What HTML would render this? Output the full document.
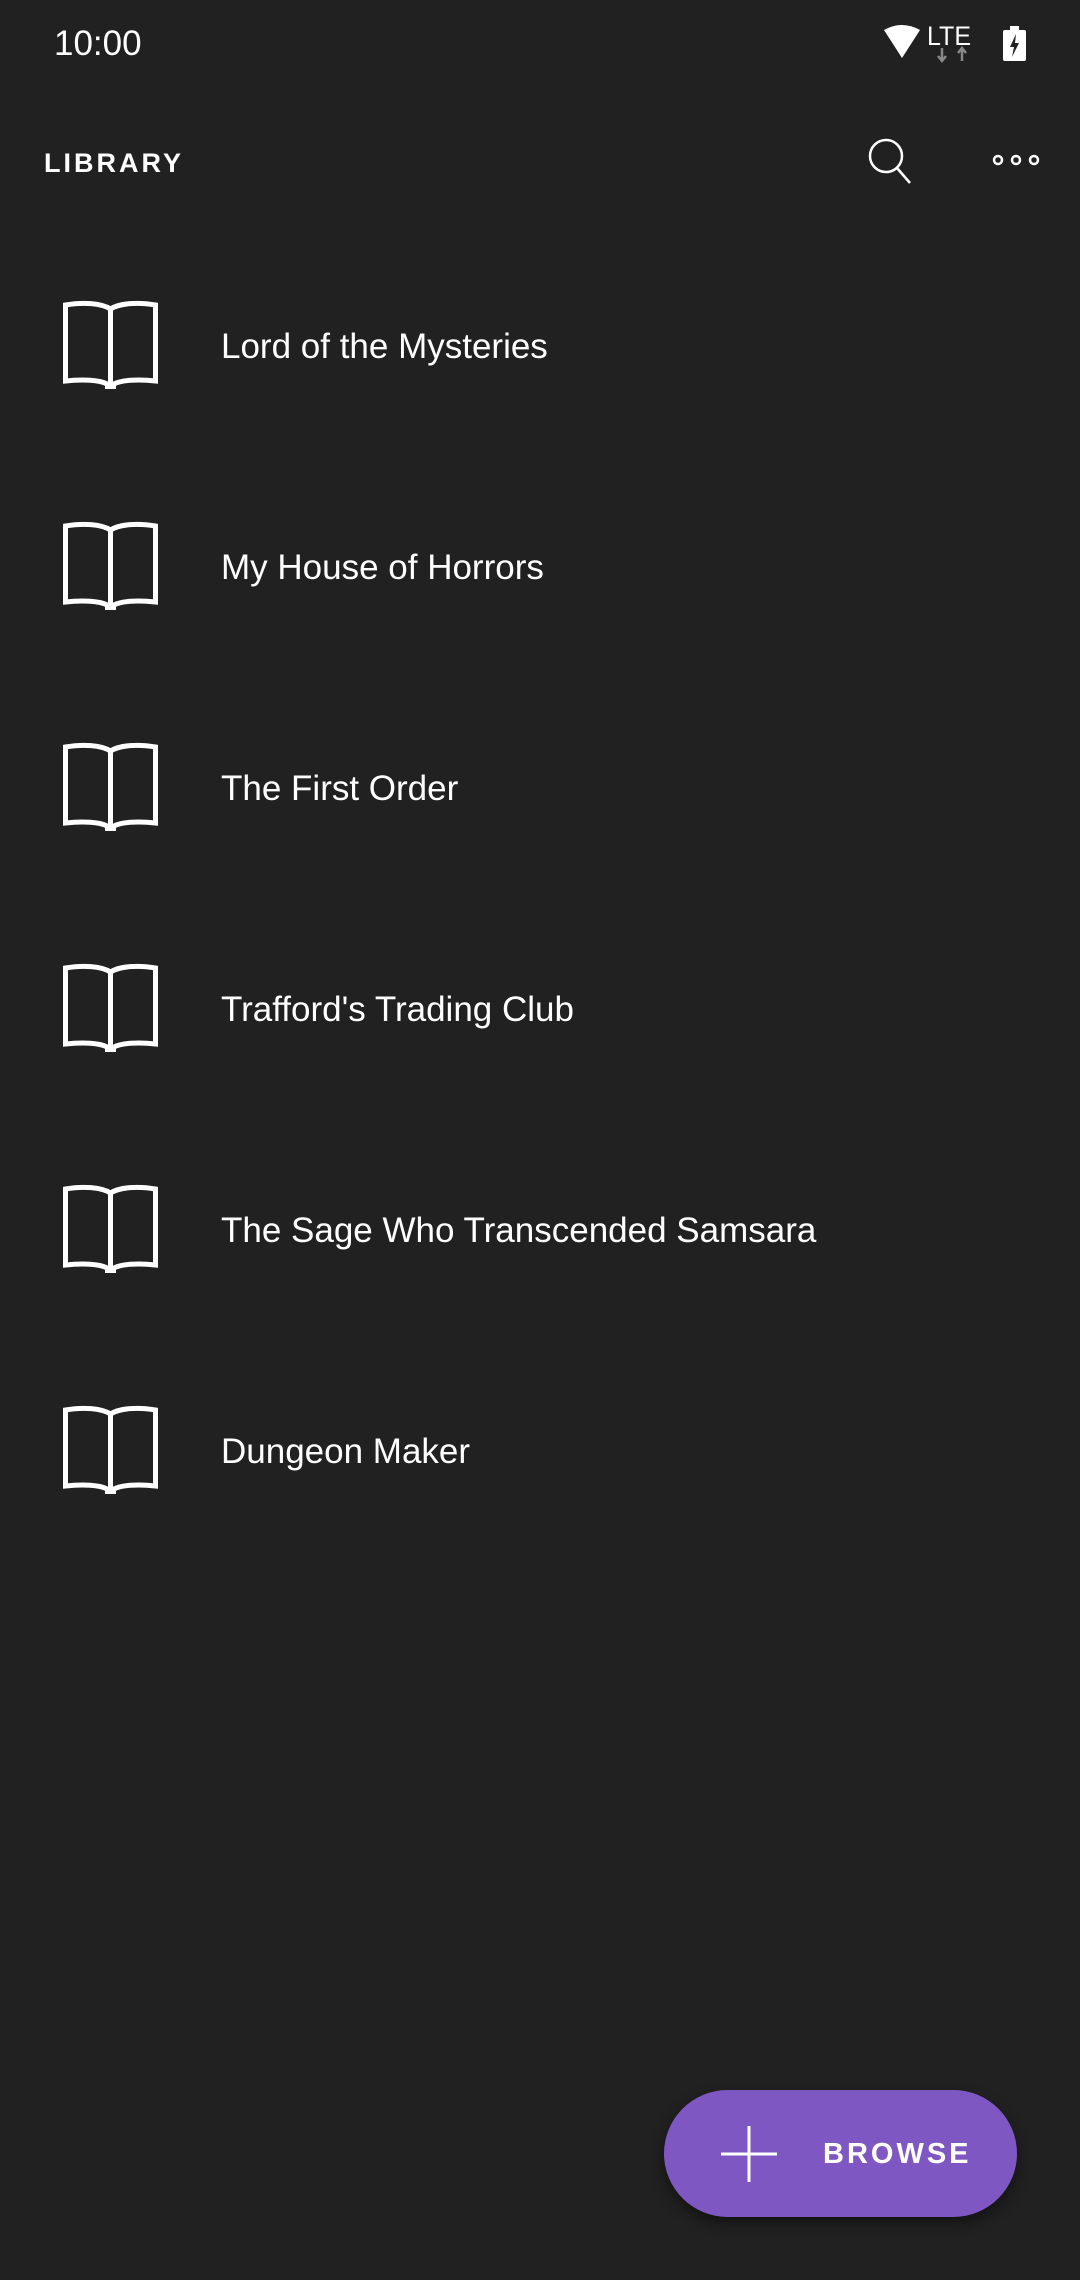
<!DOCTYPE html>
<html><head><meta charset="utf-8"><style>
html,body{margin:0;padding:0;}
body{width:1080px;height:2280px;background:#212121;position:relative;overflow:hidden;font-family:"Liberation Sans",Roboto,sans-serif;color:#fff;}
.abs{position:absolute;}
.title{position:absolute;left:221px;font-size:35px;line-height:40px;}
.book{position:absolute;left:63px;width:95px;height:90px;}
</style></head><body>
<div class="abs" style="left:54px;top:22px;font-size:35px;line-height:44px;">10:00</div>
<svg class="abs" style="left:880px;top:20px" width="160" height="45" viewBox="880 20 160 45">
<path d="M884 30 Q902 20 920 30 L902 58 Z" fill="#fff"/>
<text x="927" y="45" font-size="27" fill="#fff" font-family="Liberation Sans" textLength="44" lengthAdjust="spacingAndGlyphs">LTE</text>
<path d="M942 48 V60 M938 56 L942 61 L946 56 M962 61 V49 M958 53 L962 48 L966 53" stroke="#888" stroke-width="2.5" fill="none"/>
<rect x="1003" y="30" width="23" height="31" rx="2" fill="#fff"/>
<rect x="1010" y="26" width="9" height="5" fill="#fff"/>
<path d="M1016 34 L1010 47 H1014 L1012 57 L1019 43 H1015 Z" fill="#212121"/>
</svg>
<div class="abs" style="left:44px;top:146px;font-size:27px;line-height:34px;letter-spacing:3px;font-weight:bold;">LIBRARY</div>
<svg class="abs" style="left:860px;top:130px" width="190" height="60" viewBox="860 130 190 60">
<circle cx="886" cy="156" r="16" stroke="#fff" stroke-width="2.5" fill="none"/>
<path d="M897 168 L910 183" stroke="#fff" stroke-width="2.5"/>
<circle cx="998" cy="160" r="4" stroke="#fff" stroke-width="2.5" fill="none"/>
<circle cx="1016" cy="160" r="4" stroke="#fff" stroke-width="2.5" fill="none"/>
<circle cx="1034" cy="160" r="4" stroke="#fff" stroke-width="2.5" fill="none"/>
</svg>

<svg width="0" height="0" style="position:absolute"><defs><g id="bk">
<path d="M2.5,5 C20,2 38,3 47.5,9 C57,3 75,2 92.5,5 V81 C75,79 58,80 51,84 H44 C37,80 20,79 2.5,81 Z" fill="none" stroke="#fff" stroke-width="5" stroke-linejoin="miter"/>
<path d="M47.5,9 V84" stroke="#fff" stroke-width="5"/>
<rect x="42" y="82" width="11" height="7" fill="#fff"/>
</g></defs></svg>

<svg class="book" style="top:300px" viewBox="0 0 95 90"><use href="#bk"/></svg>
<div class="title" style="top:327px">Lord of the Mysteries</div>
<svg class="book" style="top:521px" viewBox="0 0 95 90"><use href="#bk"/></svg>
<div class="title" style="top:548px">My House of Horrors</div>
<svg class="book" style="top:742px" viewBox="0 0 95 90"><use href="#bk"/></svg>
<div class="title" style="top:769px">The First Order</div>
<svg class="book" style="top:963px" viewBox="0 0 95 90"><use href="#bk"/></svg>
<div class="title" style="top:990px">Trafford's Trading Club</div>
<svg class="book" style="top:1184px" viewBox="0 0 95 90"><use href="#bk"/></svg>
<div class="title" style="top:1211px">The Sage Who Transcended Samsara</div>
<svg class="book" style="top:1405px" viewBox="0 0 95 90"><use href="#bk"/></svg>
<div class="title" style="top:1432px">Dungeon Maker</div>

<div class="abs" style="left:664px;top:2090px;width:353px;height:127px;border-radius:64px;background:#7e57c2;box-shadow:0 6px 14px rgba(0,0,0,0.45);">
<svg class="abs" style="left:57px;top:36px" width="56" height="56"><path d="M28 0 V56 M0 28 H56" stroke="#fff" stroke-width="3"/></svg>
<div class="abs" style="left:159px;top:46px;font-size:29px;line-height:36px;letter-spacing:3px;font-weight:bold;">BROWSE</div>
</div>
</body></html>
